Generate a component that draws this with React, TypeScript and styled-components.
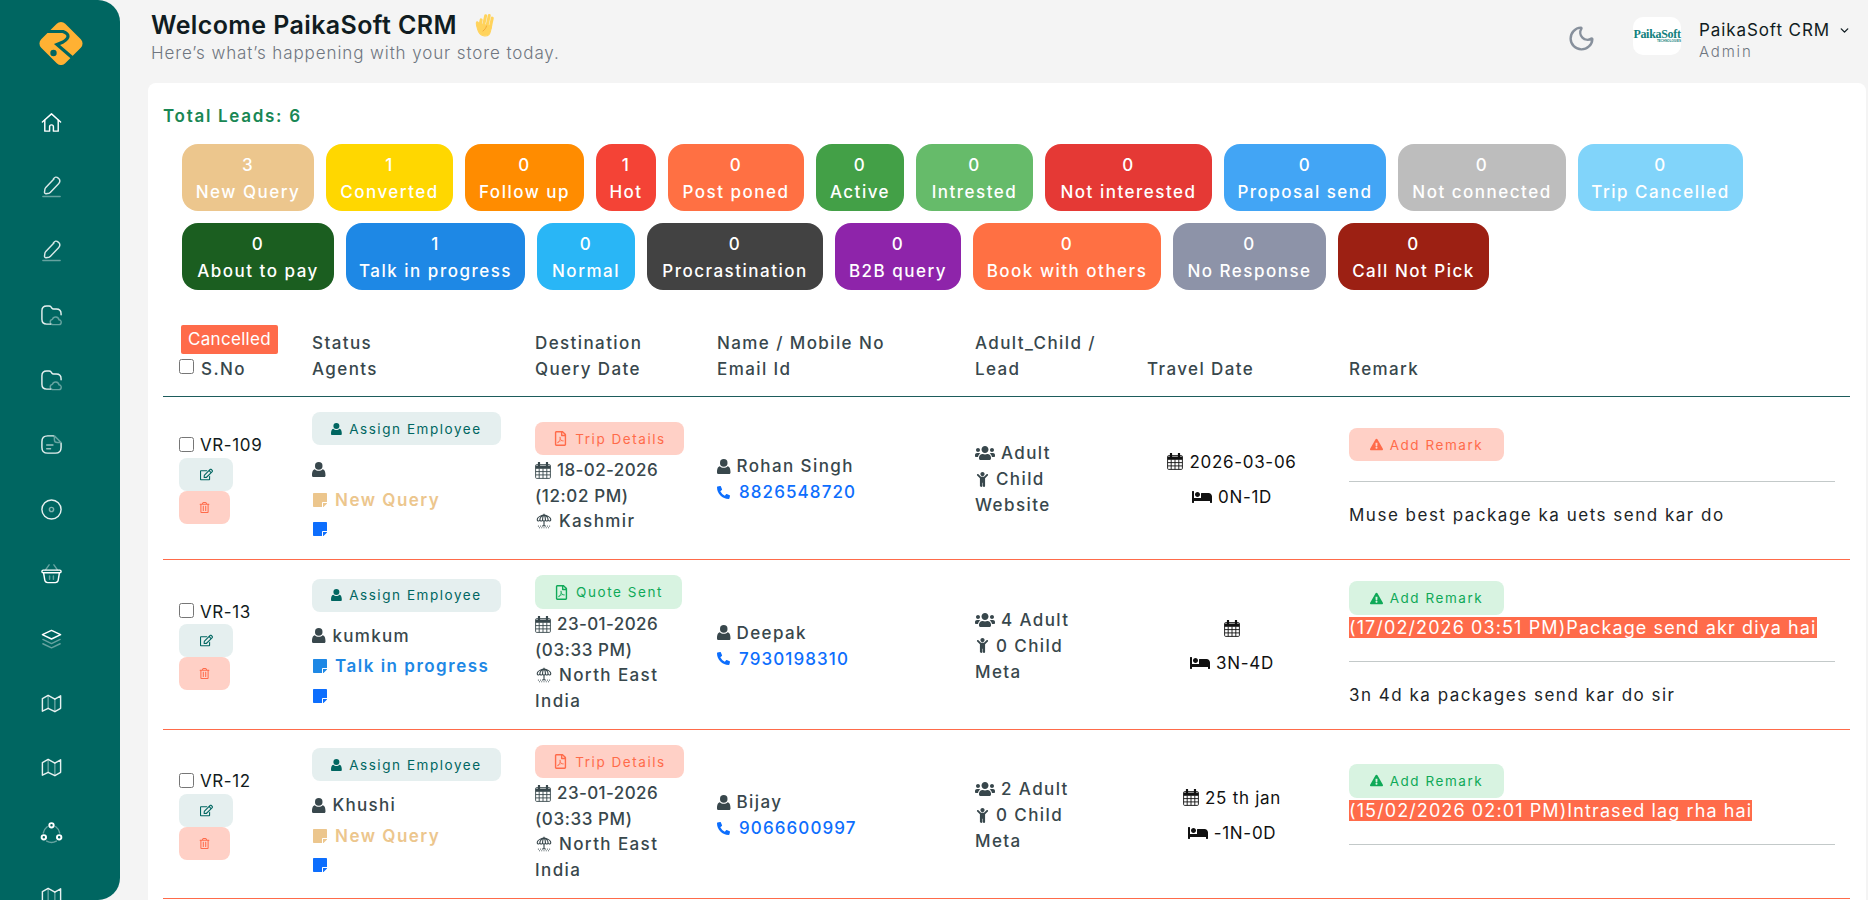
import React from "react";
import styled, { createGlobalStyle } from "styled-components";
import { Moon, ChevronDown } from "lucide-react";
import {
  FaRegEdit,
  FaRegTrashAlt,
  FaRegFilePdf,
  FaStickyNote,
  FaExclamationTriangle,
  FaUsers,
  FaChild,
  FaPhoneAlt,
  FaBed,
} from "react-icons/fa";
import { LiaUmbrellaBeachSolid } from "react-icons/lia";

const HEAD_FONT = `"Inter", "Liberation Sans", sans-serif`;
const BODY_FONT = `"Inter", "Liberation Sans", sans-serif`;

const TEAL = "#006661";
const CORAL = "#ff6b4a";
const INK = "#38474c";
const COLUMNS = "133px 223px 182px 258px 172px 202px 1fr";

const GlobalStyle = createGlobalStyle`
  html, body {
    margin: 0;
    padding: 0;
    background: #f4f4f4;
  }
  * {
    box-sizing: border-box;
  }
`;

const UserGlyph = ({ size = 15 }: { size?: number }) => (
  <svg width={size * 0.9} height={size} viewBox="0 0 14 15.5" fill="currentColor">
    <circle cx="7" cy="4" r="3.9" />
    <path d="M1.4 15.5C.5 15.5 0 14.8 0 13.9c0-3.2.7-6.1 3-6.4 1 1 2.4 1.6 4 1.6s3-.6 4-1.6c2.3.3 3 3.2 3 6.4 0 .9-.5 1.6-1.4 1.6Z" />
  </svg>
);

const CalendarGlyph = () => (
  <svg width="16" height="17" viewBox="0 0 16 17" fill="none" stroke="currentColor" strokeWidth="0.9">
    <rect x="0.6" y="2.6" width="14.8" height="13.8" rx="1" />
    <path d="M.6 6.4h14.8M.6 9.6h14.8M.6 12.9h14.8M4.2 6.4v10M8 6.4v10M11.800 6.4v10" />
    <path d="M4 .6v3.500M12 .6v3.500" strokeWidth="2.2" strokeLinecap="round" />
    <path d="M.6 4.800h14.8" strokeWidth="2.400" />
  </svg>
);

const Logo = () => (
  <svg width="44" height="44" viewBox="0 0 44 44">
    <rect x="5" y="5.500" width="34" height="34" rx="6" fill="#ffb133" transform="rotate(45 22 22.500)" />
    <path d="M1 10.500H24Q34 14.500 24 21L18 23.500L36 39" fill="none" stroke={TEAL} strokeWidth="3.200" />
    <circle cx="14.500" cy="32" r="3.200" fill={TEAL} />
  </svg>
);

const Hand = () => (
  <svg width="23" height="25" viewBox="0 0 23 25" fill="none" stroke="#ffd35c" strokeLinecap="round">
    <g transform="rotate(12 12 13)">
      <path d="M6 8v7M9.500 3v11M13 2v12M16.500 4v10" strokeWidth="3" />
      <path d="M6 14c-1-2-3-4-4-3s1 4 2.500 7c1.500 3 3.500 5 7 5s6-2 6-6v-5H6Z" fill="#ffd35c" strokeWidth="1" />
    </g>
    <path d="M9 18c2-1.500 3-3 3.500-5" stroke="#f2a93b" strokeWidth="1" />
  </svg>
);

type NavKind = "home" | "pencil" | "folder" | "note" | "disc" | "basket" | "layers" | "map" | "group";

const NavIcon = ({ kind }: { kind: NavKind }) => {
  const shapes: Record<NavKind, React.ReactNode> = {
    home: (
      <>
        <path d="M2.500 11.500 12 3l9.500 8.500" />
        <path d="M5 9.500V21h5v-4.500a2 2 0 0 1 4 0V21h5V9.500" />
      </>
    ),
    pencil: (
      <>
        <path d="M14.500 4.200 5.800 13.400c-.3.4-.6 1-.7 1.500l-.4 3c-.1 1 .6 1.700 1.600 1.600l3-.5c.5-.1 1.100-.4 1.400-.8l8.700-9.100c1.500-1.600 2.200-3.400-.1-5.600-2.300-2.100-4-1.400-5.300.6Z" opacity="0.85" />
        <path d="M3 22.500h18" opacity="0.4" />
      </>
    ),
    folder: (
      <>
        <path d="M11 21H7c-3 0-5-1-5-5V7c0-3 1.500-5 5-5h2.500c1 0 1.500.3 2 1l1 1.500c.4.5.7.700 1.500.700H17c3 0 5 1.500 5 5v1" opacity="0.9" />
        <path d="M15 21.500h4.500a2.500 2.500 0 0 0 .3-5 3.500 3.500 0 0 0-6.800-.5 2.700 2.700 0 0 0 1 5.500Z" opacity="0.4" />
      </>
    ),
    note: (
      <>
        <path d="M22 11v4c0 4-2 6-6 6H8c-4 0-6-2-6-6V9c0-4 2-6 6-6h6" opacity="0.9" />
        <path d="M15 3l7 7h-4c-2 0-3-1-3-3Z" opacity="0.4" />
        <path d="M7 12.500h6.500M7 16.500h4" opacity="0.6" />
      </>
    ),
    disc: (
      <>
        <circle cx="12" cy="12" r="10" opacity="0.9" />
        <circle cx="12" cy="12" r="2.200" opacity="0.5" />
      </>
    ),
    basket: (
      <>
        <rect x="2" y="8.500" width="20" height="2.800" rx="1.400" />
        <path d="M3.800 11.500 5 19c.3 1.600 1.200 2.500 3 2.500h8c1.800 0 2.700-.9 3-2.500l1.200-7.500" />
        <path d="M6 8 9.500 3M18 8l-3.500-5M10 14.500v3.500M14 14.500v3.500" opacity="0.4" />
      </>
    ),
    layers: (
      <>
        <path d="M12 3.500 21.500 8 12 12.500 2.500 8Z" />
        <path d="M3 13l9 4.300 9-4.300M3 17.500l9 4.300 9-4.300" opacity="0.4" />
      </>
    ),
    map: (
      <>
        <path d="M2.500 7v13l6-3 7 3.500 6-3.500V4l-6 3.500L8.500 3.500Z" opacity="0.9" />
        <path d="M8.500 3.500V17M15.500 7.500v13" opacity="0.4" />
      </>
    ),
    group: (
      <>
        <circle cx="12" cy="4.500" r="2.300" strokeWidth="2" />
        <circle cx="4" cy="17" r="2.300" strokeWidth="2" />
        <circle cx="20" cy="17" r="2.300" strokeWidth="2" />
        <path d="M7.500 6a10 10 0 0 0-4 6.500M16.500 6a10 10 0 0 1 4 6.500M7 21a10 10 0 0 0 10 0" opacity="0.4" />
      </>
    ),
  };
  return (
    <svg width="23" height="23" viewBox="0 0 24 24" fill="none" stroke="#fff" strokeWidth="1.500" strokeLinecap="round" strokeLinejoin="round">
      {shapes[kind]}
    </svg>
  );
};

const navItems: NavKind[] = [
  "home", "pencil", "pencil", "folder", "folder", "note", "disc",
  "basket", "layers", "map", "map", "group", "map",
];

const pills = [
  [
    { count: 3, label: "New Query", bg: "#ecc68d", w: 132 },
    { count: 1, label: "Converted", bg: "#ffd700", w: 127 },
    { count: 0, label: "Follow up", bg: "#ff8c00", w: 119 },
    { count: 1, label: "Hot", bg: "#f44336", w: 60 },
    { count: 0, label: "Post poned", bg: "#ff7043", w: 136 },
    { count: 0, label: "Active", bg: "#43a047", w: 88 },
    { count: 0, label: "Intrested", bg: "#66bb6a", w: 117 },
    { count: 0, label: "Not interested", bg: "#e53935", w: 167 },
    { count: 0, label: "Proposal send", bg: "#42a5f5", w: 162 },
    { count: 0, label: "Not connected", bg: "#bdbdbd", w: 168 },
    { count: 0, label: "Trip Cancelled", bg: "#81d4fa", w: 165 },
  ],
  [
    { count: 0, label: "About to pay", bg: "#1b5e20", w: 152 },
    { count: 1, label: "Talk in progress", bg: "#1e88e5", w: 179 },
    { count: 0, label: "Normal", bg: "#29b6f6", w: 98 },
    { count: 0, label: "Procrastination", bg: "#424242", w: 176 },
    { count: 0, label: "B2B query", bg: "#8e24aa", w: 126 },
    { count: 0, label: "Book with others", bg: "#ff7043", w: 188 },
    { count: 0, label: "No Response", bg: "#8d93a8", w: 153 },
    { count: 0, label: "Call Not Pick", bg: "#9c2013", w: 151 },
  ],
];

const leads = [
  {
    id: "VR-109",
    agent: "",
    status: "New Query",
    statusColor: "#ecc68d",
    quoted: false,
    date: "18-02-2026",
    time: "(12:02 PM)",
    place: "Kashmir",
    name: "Rohan Singh",
    phone: "8826548720",
    adult: "Adult",
    child: "Child",
    source: "Website",
    travel: "2026-03-06",
    stay: "0N-1D",
    remarked: false,
    flagged: "",
    remark: "Muse best package ka uets send kar do",
  },
  {
    id: "VR-13",
    agent: "kumkum",
    status: "Talk in progress",
    statusColor: "#1e88e5",
    quoted: true,
    date: "23-01-2026",
    time: "(03:33 PM)",
    place: "North East India",
    name: "Deepak",
    phone: "7930198310",
    adult: "4 Adult",
    child: "0 Child",
    source: "Meta",
    travel: "",
    stay: "3N-4D",
    remarked: true,
    flagged: "(17/02/2026 03:51 PM)Package send akr diya hai",
    remark: "3n 4d ka packages send kar do sir",
  },
  {
    id: "VR-12",
    agent: "Khushi",
    status: "New Query",
    statusColor: "#ecc68d",
    quoted: false,
    date: "23-01-2026",
    time: "(03:33 PM)",
    place: "North East India",
    name: "Bijay",
    phone: "9066600997",
    adult: "2 Adult",
    child: "0 Child",
    source: "Meta",
    travel: "25 th jan",
    stay: "-1N-0D",
    remarked: true,
    flagged: "(15/02/2026 02:01 PM)Intrased lag rha hai",
    remark: "",
  },
];

const App = () => {
  return (
    <Page>
      <GlobalStyle />
      <Sidebar>
        <LogoSlot>
          <Logo />
        </LogoSlot>
        <NavList>
          {navItems.map((kind, i) => (
            <NavIcon key={i} kind={kind} />
          ))}
        </NavList>
      </Sidebar>

      <Main>
        <TopBar>
          <div>
            <Title>
              Welcome PaikaSoft CRM
              <Hand />
            </Title>
            <Subtitle>Here’s what’s happening with your store today.</Subtitle>
          </div>
          <Account>
            <MoonButton>
              <Moon size={29} strokeWidth={2} />
            </MoonButton>
            <Avatar>
              PaikaSoft
              <small>TECHNOLOGIES</small>
            </Avatar>
            <AccountText>
              <AccountName>
                PaikaSoft CRM
                <ChevronDown size={13} strokeWidth={2.5} />
              </AccountName>
              <AccountRole>Admin</AccountRole>
            </AccountText>
          </Account>
        </TopBar>

        <Card>
          <TotalLeads>Total Leads: 6</TotalLeads>
          <PillGroup>
            {pills.map((row, i) => (
              <PillRow key={i}>
                {row.map((pill) => (
                  <Pill key={pill.label} $bg={pill.bg} $w={pill.w}>
                    <span>{pill.count}</span>
                    <span>{pill.label}</span>
                  </Pill>
                ))}
              </PillRow>
            ))}
          </PillGroup>

          <HeadRow>
            <div>
              <CancelBadge>Cancelled</CancelBadge>
              <HeadCheck>
                <Check type="checkbox" />
                S.No
              </HeadCheck>
            </div>
            <div>
              Status
              <br />
              Agents
            </div>
            <div>
              Destination
              <br />
              Query Date
            </div>
            <div>
              Name / Mobile No
              <br />
              Email Id
            </div>
            <div>
              Adult_Child /
              <br />
              Lead
            </div>
            <div>Travel Date</div>
            <div>Remark</div>
          </HeadRow>

          {leads.map((lead) => (
            <LeadRow key={lead.id}>
              <div>
                <IdLine>
                  <Check type="checkbox" />
                  {lead.id}
                </IdLine>
                <SoftButton $tone="teal" $w={54}>
                  <FaRegEdit size={13} />
                </SoftButton>
                <SoftButton $tone="red" $w={51}>
                  <FaRegTrashAlt size={11} />
                </SoftButton>
              </div>

              <div>
                <AssignButton $tone="teal" $w={189}>
                  <UserGlyph size={12} />
                  Assign Employee
                </AssignButton>
                <InfoLine>
                  <UserGlyph />
                  {lead.agent}
                </InfoLine>
                <StatusLine $color={lead.statusColor}>
                  <FaStickyNote size={16} />
                  {lead.status}
                </StatusLine>
                <InfoLine>
                  <FaStickyNote size={16} color="#0d6efd" />
                </InfoLine>
              </div>

              <div>
                <ActionButton $tone={lead.quoted ? "green" : "red"} $w={lead.quoted ? 147 : 149} $tall={lead.quoted}>
                  <FaRegFilePdf size={15} />
                  {lead.quoted ? "Quote Sent" : "Trip Details"}
                </ActionButton>
                <TextLine $ls={0.4}>
                  <CalendarGlyph />
                  {lead.date}
                </TextLine>
                <TextLine $ls={0.6}>{lead.time}</TextLine>
                <Place>
                  <LiaUmbrellaBeachSolid size={18} />
                  &nbsp;{lead.place}
                </Place>
              </div>

              <div>
                <TextLine>
                  <UserGlyph />
                  {lead.name}
                </TextLine>
                <PhoneLine $ls={1.1}>
                  <FaPhoneAlt size={13} />
                  {lead.phone}
                </PhoneLine>
              </div>

              <div>
                <TextLine>
                  <FaUsers size={20} />
                  {lead.adult}
                </TextLine>
                <TextLine>
                  <FaChild size={15} />
                  {lead.child}
                </TextLine>
                <TextLine>{lead.source}</TextLine>
              </div>

              <TravelCell>
                <TravelLine $ls={0.7}>
                  <CalendarGlyph />
                  {lead.travel}
                </TravelLine>
                <TravelLine $ls={0.7}>
                  <FaBed size={20} />
                  {lead.stay}
                </TravelLine>
              </TravelCell>

              <RemarkCell>
                <SoftButton $tone={lead.remarked ? "green" : "red"} $w={155} $tall={lead.remarked}>
                  <FaExclamationTriangle size={13} />
                  Add Remark
                </SoftButton>
                {lead.flagged && (
                  <FlagLine>
                    <Flagged>{lead.flagged}</Flagged>
                  </FlagLine>
                )}
                <Rule />
                {lead.remark && <RemarkText>{lead.remark}</RemarkText>}
              </RemarkCell>
            </LeadRow>
          ))}
        </Card>
      </Main>
    </Page>
  );
};

export default App;

const Page = styled.div`
  display: flex;
  height: 100vh;
  overflow: hidden;
  background: #f4f4f4;
  color: ${INK};
  font-family: ${HEAD_FONT};
`;

const Sidebar = styled.aside`
  flex: 0 0 120px;
  height: 900px;
  padding: 21px 0 0 40px;
  overflow: hidden;
  background: ${TEAL};
  border-radius: 0 22px 22px 0;
`;

const LogoSlot = styled.div`
  height: 44px;
  margin-bottom: 46px;
  margin-left: -1px;
`;

const NavList = styled.nav`
  display: flex;
  flex-direction: column;
  gap: 41.6px;

  & > svg {
    display: block;
  }

  & > svg:first-child {
    margin-bottom: -0.8px;
  }
`;

const Main = styled.main`
  flex: 1;
  min-width: 0;
  padding-left: 28px;
  padding-right: 2px;
`;

const TopBar = styled.header`
  display: flex;
  align-items: flex-start;
  justify-content: space-between;
  height: 83px;
  padding-top: 9px;
  padding-left: 3px;
`;

const Title = styled.h1`
  display: flex;
  align-items: center;
  gap: 17px;
  height: 32px;
  margin: 0;
  color: #101c21;
  font-size: 25px;
  font-weight: 600;
  letter-spacing: 0.4px;
`;

const Subtitle = styled.p`
  margin: 2px 0 0;
  color: #6f7680;
  font-family: ${BODY_FONT};
  font-size: 17px;
  font-weight: 300;
  letter-spacing: 0.9px;
`;

const Account = styled.div`
  display: flex;
  align-items: flex-start;
  padding-top: 8px;
  padding-right: 15px;
`;

const MoonButton = styled.div`
  margin: 7px 37px 0 0;
  color: #87909c;
`;

const Avatar = styled.div`
  display: flex;
  flex-direction: column;
  align-items: center;
  justify-content: center;
  width: 48px;
  height: 38px;
  margin-right: 18px;
  color: #127f7c;
  background: #fff;
  border-radius: 10px;
  font-family: "Liberation Serif", serif;
  font-size: 12px;
  font-weight: 700;
  letter-spacing: -0.3px;
  line-height: 10px;

  & > small {
    align-self: flex-end;
    font-family: "Liberation Sans", sans-serif;
    font-size: 3px;
    letter-spacing: 0;
    line-height: 5px;
  }
`;

const AccountText = styled.div`
  font-family: ${BODY_FONT};
`;

const AccountName = styled.div`
  display: flex;
  align-items: center;
  gap: 8px;
  color: #101c21;
  font-size: 17px;
  letter-spacing: 0.9px;
  line-height: 26px;
`;

const AccountRole = styled.div`
  margin-top: -1px;
  color: #6f7680;
  font-size: 15px;
  font-weight: 300;
  letter-spacing: 1.8px;
`;

const Card = styled.section`
  height: 900px;
  padding: 21px 16px 0 15px;
  background: #fff;
  border-radius: 8px 8px 0 0;
`;

const TotalLeads = styled.div`
  color: #198754;
  font-size: 17px;
  font-weight: 600;
  letter-spacing: 1.7px;
  line-height: 24px;
`;

const PillGroup = styled.div`
  display: flex;
  flex-direction: column;
  gap: 12px;
  margin: 16px 0 0 19px;
`;

const PillRow = styled.div`
  display: flex;
  gap: 12px;
`;

const Pill = styled.div<{ $bg: string; $w: number }>`
  display: flex;
  flex-direction: column;
  align-items: center;
  justify-content: center;
  width: ${(p) => p.$w}px;
  height: 67px;
  padding-top: 2px;
  color: #fff;
  background: ${(p) => p.$bg};
  border-radius: 16px;
  font-size: 17px;
  font-weight: 500;
  letter-spacing: 1.5px;
  line-height: 27px;
  white-space: nowrap;
`;

const HeadRow = styled.div`
  display: grid;
  grid-template-columns: ${COLUMNS};
  align-items: end;
  margin-top: 35px;
  padding: 0 0 14px 16px;
  font-size: 17px;
  font-weight: 500;
  letter-spacing: 1.4px;
  line-height: 26px;
  border-bottom: 1px solid #1d5c5c;
`;

const CancelBadge = styled.div`
  width: 97px;
  height: 29px;
  margin: 0 0 2px 2px;
  color: #fff;
  background: ${CORAL};
  border-radius: 2px;
  font-size: 17px;
  font-weight: 400;
  letter-spacing: 0.3px;
  line-height: 29px;
  text-align: center;
`;

const HeadCheck = styled.div`
  display: flex;
  align-items: center;
  gap: 7px;

  & > input {
    margin-bottom: 5px;
  }
`;

const Check = styled.input`
  width: 15px;
  height: 15px;
  margin: 0;
`;

const LeadRow = styled.div`
  display: grid;
  grid-template-columns: ${COLUMNS};
  align-items: center;
  padding: 15px 0 15px 16px;
  font-size: 17px;
  font-weight: 500;
  letter-spacing: 1.4px;
  line-height: 26px;
  border-bottom: 1px solid ${CORAL};
`;

const IdLine = styled.div`
  display: flex;
  align-items: center;
  gap: 6px;
  height: 25px;
  color: #111b20;
  font-family: ${BODY_FONT};
  font-size: 17px;
  font-weight: 400;
  letter-spacing: 0.6px;

  & > input {
    margin-bottom: 2px;
  }
`;

const tones = {
  teal: { bg: "#e5efef", fg: "#006661" },
  red: { bg: "#ffd0c6", fg: "#ff6b4a" },
  green: { bg: "#d8f3e1", fg: "#0fa958" },
};

const SoftButton = styled.div<{ $tone: keyof typeof tones; $w: number; $tall?: boolean }>`
  display: flex;
  align-items: center;
  justify-content: center;
  gap: 7px;
  width: ${(p) => p.$w}px;
  height: ${(p) => (p.$tall ? 34 : 33)}px;
  color: ${(p) => tones[p.$tone].fg};
  background: ${(p) => tones[p.$tone].bg};
  border-radius: 8px;
  font-family: ${BODY_FONT};
  font-size: 13.5px;
  font-weight: 400;
  letter-spacing: 1.55px;
  white-space: nowrap;
`;

const AssignButton = styled(SoftButton)`
  margin-bottom: 9px;
`;

const ActionButton = styled(SoftButton)`
  margin-bottom: 1px;
`;

const InfoLine = styled.div`
  display: flex;
  align-items: center;
  gap: 7px;
  height: 30px;
  font-size: 17px;
  letter-spacing: 1.3px;
`;

const StatusLine = styled(InfoLine)<{ $color: string }>`
  padding-top: 1px;
  font-weight: 600;
  letter-spacing: 1.5px;
  color: ${(p) => p.$color};
`;

const TextLine = styled.div<{ $ls?: number }>`
  display: flex;
  align-items: center;
  gap: 6px;
  height: 26px;
  padding-top: 2px;
  letter-spacing: ${(p) => p.$ls ?? 1.4}px;
`;

const Place = styled.div`
  width: 145px;

  & > svg {
    vertical-align: -3px;
  }
`;

const PhoneLine = styled(TextLine)`
  gap: 9px;
  color: #0d6efd;
`;

const TravelCell = styled.div`
  display: flex;
  flex-direction: column;
  gap: 9px;
  width: 170px;
  color: #111;
  font-weight: 400;
`;

const TravelLine = styled(TextLine)`
  justify-content: center;
`;

const RemarkCell = styled.div`
  padding-right: 15px;
  font-family: ${BODY_FONT};
  font-weight: 400;
`;

const FlagLine = styled.div`
  height: 26px;
  padding-top: 2px;
  line-height: 21px;
`;

const Flagged = styled.span`
  display: inline-block;
  color: #fff;
  background: ${CORAL};
  font-size: 18px;
  letter-spacing: 1.1px;
`;

const Rule = styled.div`
  height: 1px;
  margin: 20px 0;
  background: #c3c9c9;
`;

const RemarkText = styled.div`
  color: #1d2528;
  letter-spacing: 1.5px;
`;
